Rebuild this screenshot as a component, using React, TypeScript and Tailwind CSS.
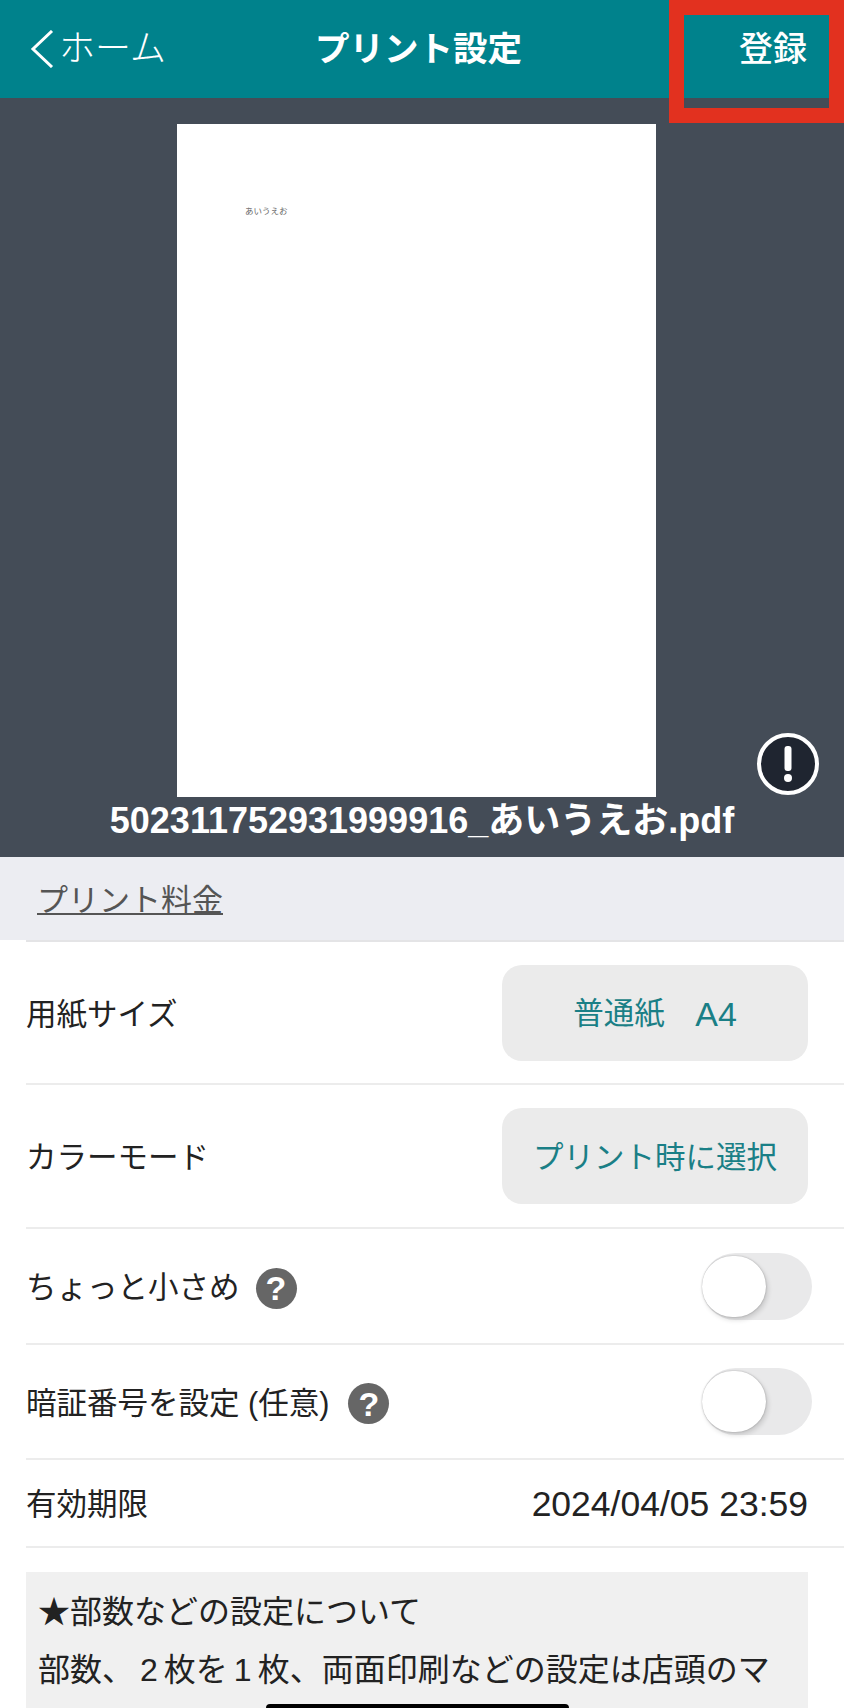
const jp = "font-['Liberation_Sans','Noto_Sans_CJK_JP',sans-serif]";

function Toggle() {
  return (
    <div className="flex h-[67px] w-[110px] items-center rounded-full bg-[#e9e9ea]">
      <div className="h-[61px] w-[64px] rounded-full bg-white shadow-[2px_3px_5px_rgba(0,0,0,0.14),0_0_2px_rgba(0,0,0,0.28)]" />
    </div>
  );
}

function Help() {
  return (
    <span className="flex h-[41px] w-[41px] items-center justify-center rounded-full bg-[#666666] text-[34px] font-bold leading-none text-white">
      ?
    </span>
  );
}

function Select({ children }: { children: React.ReactNode }) {
  return (
    <div className="flex h-[96px] w-[306px] items-center justify-center rounded-[20px] bg-[#ebebeb] pt-[3px] text-[30.5px] text-[#1a7f86]">
      {children}
    </div>
  );
}

function Row({ h, children }: { h: string; children: React.ReactNode }) {
  return (
    <div className={`flex ${h} items-center justify-between border-b-2 border-[#ececec] pr-[36px] text-[30.5px] text-[#222]`}>
      {children}
    </div>
  );
}

export default function App() {
  return (
    <div className={`${jp} relative h-[1708px] w-[844px] overflow-hidden bg-white`}>
      <header className="flex h-[98px] items-center justify-between bg-[#00828c] pl-[30px] pr-[37px] text-white">
        <div className="flex w-[200px] items-center gap-[5px]">
          <svg width="24" height="38" viewBox="0 0 24 38" fill="none" stroke="white" strokeWidth="3">
            <path d="M22 1 L3 19 L22 37" />
          </svg>
          <span className="text-[36px] leading-none font-light">ホーム</span>
        </div>
        <h1 className="text-[34.5px] font-bold leading-none">プリント設定</h1>
        <span className="flex w-[200px] justify-end text-[34px] font-medium leading-none">登録</span>
      </header>

      <section className="relative flex h-[759px] flex-col items-center bg-[#444c57] pt-[26px]">
        <div className="mr-[11px] h-[673px] w-[479px] bg-white pl-[68px] pt-[83px]">
          <p className="text-[8.5px] leading-none text-[#666]">あいうえお</p>
        </div>
        <p className="mt-[5px] whitespace-nowrap text-[36px] font-bold leading-[38px] text-white">502311752931999916_あいうえお.pdf</p>
        <div className="absolute right-[25px] top-[635px] flex h-[62px] w-[62px] items-center justify-center rounded-full border-[4px] border-white bg-[#1f2530]">
          <svg width="12" height="36" viewBox="0 0 12 36" fill="white">
            <rect x="2.5" y="0" width="7" height="25" rx="3" />
            <circle cx="6" cy="32" r="4" />
          </svg>
        </div>
      </section>

      <div className="flex h-[83px] items-center bg-[#ecedf2] pl-[37px] pt-[6px] text-[31px] text-[#555]">
        <span className="underline decoration-2 underline-offset-2">プリント料金</span>
      </div>

      <div className="pl-[26px]">
        <div className="border-t-2 border-[#e4e4e6]" />
        <Row h="h-[143px]">
          <span className="pt-[4px]">用紙サイズ</span>
          <Select>普通紙　<span className="text-[34px]">A4</span></Select>
        </Row>
        <Row h="h-[144px]">
          <span className="pt-[4px]">カラーモード</span>
          <Select>プリント時に選択</Select>
        </Row>
        <Row h="h-[116px]">
          <span className="flex items-center gap-[16px] pt-[4px]">ちょっと小さめ<Help /></span>
          <span className="-mr-[4px]"><Toggle /></span>
        </Row>
        <Row h="h-[115px]">
          <span className="flex items-center gap-[19px] pt-[4px]">暗証番号を設定 (任意)<Help /></span>
          <span className="-mr-[4px]"><Toggle /></span>
        </Row>
        <Row h="h-[88px]">
          <span className="pt-[4px]">有効期限</span>
          <span className="pt-[4px] text-[35.5px] text-[#222]">2024/04/05 23:59</span>
        </Row>
      </div>

      <div className="mx-[26px] mt-[24px] h-[200px] w-[782px] bg-[#f0f0f0] px-[12px] pt-[11px] text-[32px] leading-[58px] text-[#222]">
        <p className="whitespace-nowrap">★部数などの設定について</p>
        <p className="whitespace-nowrap">部数、<span className="mx-[6px]">2</span>枚を<span className="mx-[6px]">1</span>枚、両面印刷などの設定は店頭のマ</p>
      </div>

      <div className="absolute right-0 top-0 h-[123px] w-[175px] border-[15px] border-[#e2311f]" />
      <div className="absolute bottom-0 left-[266px] h-[4px] w-[303px] rounded-t-[6px] bg-black" />
    </div>
  );
}
